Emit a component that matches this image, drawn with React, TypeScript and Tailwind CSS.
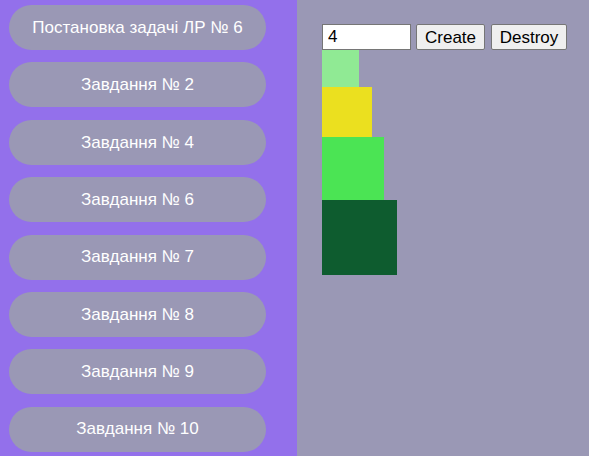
import React from 'react';

const tasks = [
  'Постановка задачі ЛР № 6',
  'Завдання № 2',
  'Завдання № 4',
  'Завдання № 6',
  'Завдання № 7',
  'Завдання № 8',
  'Завдання № 9',
  'Завдання № 10',
];

const boxes = [
  { size: 'w-[37px] h-[37px]', color: 'bg-[#90ea94]' },
  { size: 'w-[50px] h-[50px]', color: 'bg-[#ebe01f]' },
  { size: 'w-[62px] h-[63px]', color: 'bg-[#4be454]' },
  { size: 'w-[75px] h-[75px]', color: 'bg-[#0e5c2f]' },
];

export default function App() {
  return (
    <div className="flex h-[456px] w-[589px] overflow-hidden font-['Liberation_Sans',Arial,sans-serif]">
      {/* Sidebar */}
      <nav className="flex w-[297px] shrink-0 flex-col gap-[12.4px] bg-[#9370eb] pl-[9px] pt-[5px]">
        {tasks.map((task) => (
          <button
            key={task}
            className="flex h-[45px] w-[257px] shrink-0 items-center justify-center rounded-full bg-[#9a98b5] text-[17px] text-white"
          >
            {task}
          </button>
        ))}
      </nav>

      {/* Content */}
      <main className="flex-1 bg-[#9a98b5] pl-[25px] pt-[24px]">
        <div className="flex items-end">
          <input
            defaultValue="4"
            className="h-[26px] w-[89px] border border-[#767676] bg-white px-[5px] text-[17px] text-black outline-none"
          />
          <button className="ml-[5px] h-[26px] w-[69px] rounded-[2px] border border-[#767676] bg-[#efefef] text-[17px] text-black">
            Create
          </button>
          <button className="ml-[6px] h-[26px] w-[76px] rounded-[2px] border border-[#767676] bg-[#efefef] text-[17px] text-black">
            Destroy
          </button>
        </div>
        <div className="flex flex-col">
          {boxes.map((b, i) => (
            <div key={i} className={`${b.size} ${b.color}`} />
          ))}
        </div>
      </main>
    </div>
  );
}
